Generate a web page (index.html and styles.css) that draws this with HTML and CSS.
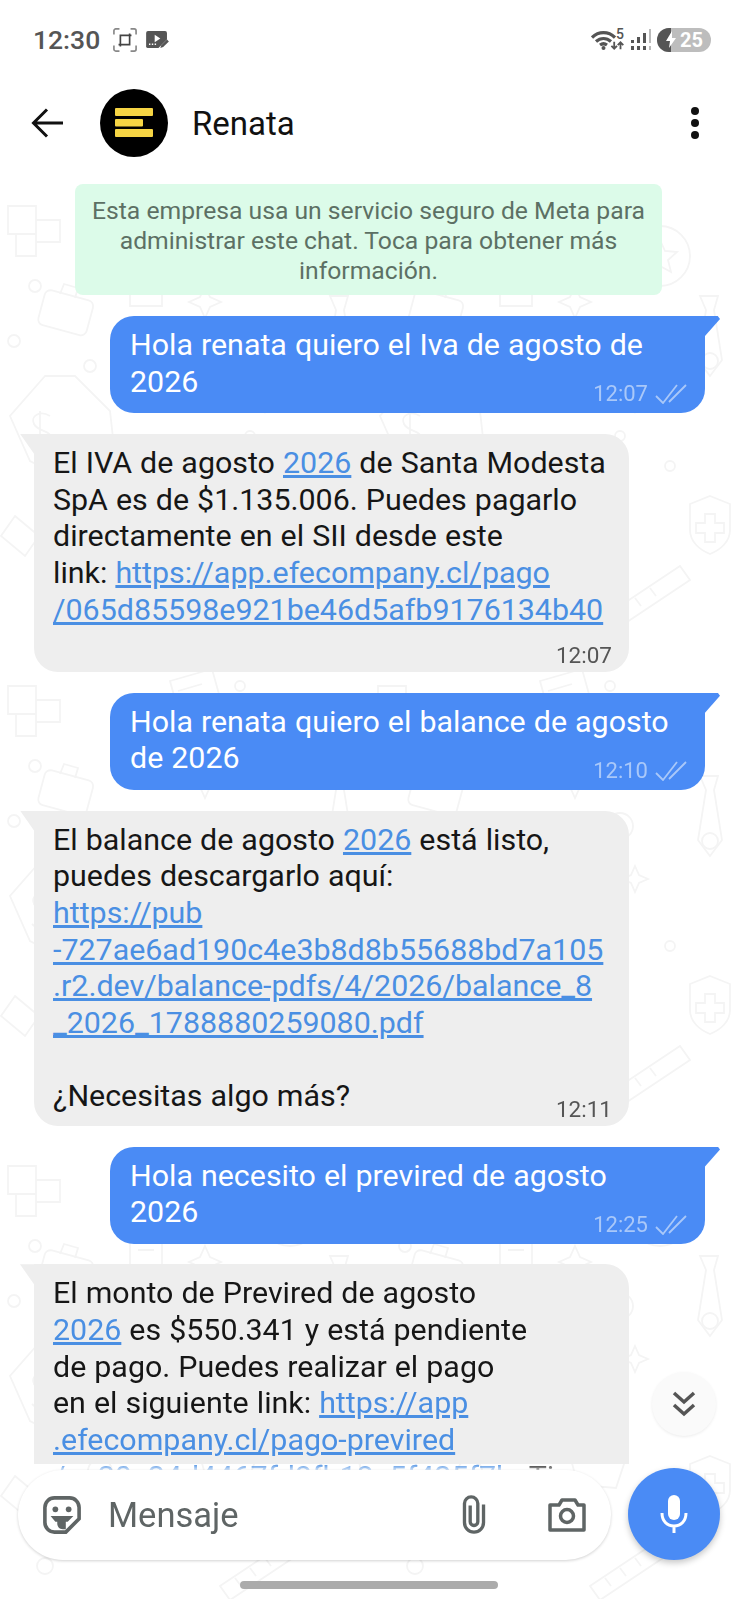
FILE: index.html
```html
<!doctype html>
<html lang="es">
<head>
	<meta charset="utf-8">
	<meta name="viewport" content="width=device-width, initial-scale=1.0">
	<title>Renata</title>
	<link rel="stylesheet" href="styles.css">
</head>
<body>
	<div class="app">
		<div class="status-bar">
			<span class="status-time">12:30</span>
			<svg class="status-crop" width="24" height="24" viewBox="0 0 26 26" fill="none" stroke="#888" stroke-width="1.800">
				<path d="M1 7V3a2 2 0 0 1 2-2h4M19 1h4a2 2 0 0 1 2 2v4M25 19v4a2 2 0 0 1-2 2h-4M7 25H3a2 2 0 0 1-2-2v-4"/>
				<path d="M8 18h10V8H8zM6 18h2M18 8h2M8 20v-2M18 8V6" stroke="#444"/>
			</svg>
			<svg class="status-video" width="23" height="18" viewBox="0 0 24 19">
				<path d="M2 0h18a2 2 0 0 1 2 2v7l-9 9H2a2 2 0 0 1-2-2V2a2 2 0 0 1 2-2z" fill="#555"/>
				<path d="M9 4l6 4-6 4z" fill="#fff"/>
				<path d="M3 14h1.500M6 14h1.500M9 14h1.500" stroke="#fff" stroke-width="1.500"/>
				<path d="M15 18l1-3 6-6 2 2-6 6z" fill="#555"/>
			</svg>
			<div class="status-right">
				<svg class="status-wifi" width="25" height="20" viewBox="0 0 25 20" fill="none" stroke="#555" stroke-width="3.200">
					<path d="M1 7.500C7.500 1 17.500 1 24 7.500M5 11.500c4.500-4 10.500-4 15 0M9 15c2.500-1.800 4.500-1.800 7 0"/>
					<circle cx="12.500" cy="18" r="2" fill="#555" stroke="none"/>
				</svg>
				<div class="status-net">
					<span class="status-five">5</span>
					<svg width="14" height="11" viewBox="0 0 20 11" fill="none" stroke="#555" stroke-width="2.600">
						<path d="M6 0v10M2 6l4 4 4-4M15 11V1M11 5l4-4 4 4"/>
					</svg>
				</div>
				<svg class="status-signal" width="20" height="22" viewBox="0 0 20 22" fill="#555">
					<rect x="0" y="11" width="3" height="3"/><rect x="0" y="17" width="3" height="4"/>
					<rect x="6" y="8" width="3" height="6"/><rect x="6" y="17" width="3" height="4"/>
					<rect x="12" y="4" width="3" height="10"/><rect x="12" y="17" width="3" height="4"/>
					<rect x="18" y="0" width="2" height="14" fill="#bbb"/><rect x="18" y="17" width="2" height="4" fill="#bbb"/>
				</svg>
				<div class="battery">
					<div class="battery-fill">
						<svg width="10" height="17" viewBox="0 0 10 17"><path d="M6 0L0 10h4l-1 7 7-10H6z" fill="#fff"/></svg>
					</div>
					<span class="battery-level">25</span>
				</div>
			</div>
		</div>

		<div class="toolbar">
			<svg class="toolbar-back" width="32" height="30" viewBox="0 0 32 30" fill="none" stroke="#111" stroke-width="3">
				<path d="M32 15H3M16 1.500L2.500 15 16 28.500"/>
			</svg>
			<svg class="toolbar-avatar" width="68" height="68" viewBox="0 0 68 68">
				<circle cx="34" cy="34" r="34" fill="#000"/>
				<rect x="15" y="19" width="38" height="8" rx="1" fill="#f6d544"/>
				<rect x="15" y="30" width="28" height="7.500" rx="1" fill="#f6d544"/>
				<rect x="15" y="40" width="38" height="8" rx="1" fill="#f6d544"/>
			</svg>
			<span class="toolbar-name">Renata</span>
			<div class="toolbar-menu"><i></i><i></i><i></i></div>
		</div>

		<div class="chat">
			<svg class="chat-pattern" width="738" height="1423" xmlns="http://www.w3.org/2000/svg">
				<defs>
					<pattern id="doodles" width="370" height="480" patternUnits="userSpaceOnUse" x="0" y="-10">
						<g fill="none" stroke="#f4f4f4" stroke-width="1.800">
							<path d="M45 210l-35 40 20 45 40 20 45-25-5-45-35-35z"/>
							<path d="M40 245v45M50 250c-10-6-20 0-16 8s18 6 18 16-14 10-20 4"/>
							<rect x="40" y="130" width="50" height="36" rx="6" transform="rotate(15 70 150)"/>
							<path d="M60 128l4-10 14 4-3 10"/>
							<path d="M8 40h28v28H8zM36 54h24v22H36zM16 68h20v22H16z"/>
							<circle cx="35" cy="120" r="6"/><circle cx="90" cy="200" r="6"/><circle cx="14" cy="175" r="6"/>
							<circle cx="100" cy="345" r="12"/><circle cx="45" cy="440" r="8"/><circle cx="120" cy="420" r="6"/>
							<circle cx="290" cy="90" r="30"/><path d="M290 74l5 11 12 1-9 8 3 12-11-6-11 6 3-12-9-8 12-1z"/>
							<circle cx="205" cy="230" r="7"/><circle cx="250" cy="180" r="13"/><circle cx="340" cy="195" r="8"/>
							<path d="M200 330l24-18 32 20-10 30-38-3z"/>
							<path d="M170 35l42-12 10 36-42 12zM178 45l24-7M182 57l24-7"/>
							<path d="M330 130h18l-4 14 8 50-12 16-12-16 8-50z"/>
							<path d="M130 100h32v40h-32zM138 112h16M138 124h16"/>
							<path d="M310 400l-90 60 10 14 90-60zM235 452l6 8M250 442l6 8M265 432l6 8M280 422l6 8"/>
							<circle cx="170" cy="400" r="22"/><circle cx="170" cy="400" r="11"/>
							<path d="M80 360c22-20 56-18 70 0s2 40-15 46"/>
							<path d="M340 330l20 8v26c0 12-10 20-20 24-10-4-20-12-20-24v-26zM335 348h10v9h9v10h-9v9h-10v-9h-9v-10h9z"/>
							<path d="M205 120l5 11 11 5-11 5-5 11-5-11-11-5 11-5z"/>
							<path d="M120 280c-15 12-5 38 15 44l26-22-15-22z"/>
							<path d="M15 350l24 20-14 20-24-20z"/>
							<circle cx="150" cy="60" r="5"/><circle cx="250" cy="270" r="5"/><circle cx="300" cy="300" r="5"/>
							<circle cx="60" cy="325" r="5"/><circle cx="240" cy="40" r="5"/><circle cx="130" cy="220" r="10"/>
							<path d="M265 220l4 9 9 4-9 4-4 9-4-9-9-4 9-4z"/>
						</g>
					</pattern>
				</defs>
				<rect width="738" height="1423" fill="url(#doodles)"/>
			</svg>

			<div class="messages">
				<div class="notice">Esta empresa usa un servicio seguro de Meta para<br>administrar este chat. Toca para obtener más<br>información.</div>

				<div class="bubble bubble-out">
					<p>Hola renata quiero el Iva de agosto de<br>2026</p>
					<div class="meta">12:07
						<svg class="meta-check" width="33" height="20" viewBox="0 0 33 20"><path d="M1 12l7 7L22 1M14 18L31 1" fill="none" stroke="currentColor" stroke-width="1.800"/></svg>
					</div>
				</div>

				<div class="bubble bubble-in bubble-spaced">
					<p>El IVA de agosto <a href="#">2026</a> de Santa Modesta<br>SpA es de $1.135.006. Puedes pagarlo<br>directamente en el SII desde este<br>link: <a href="#">https://app.efecompany.cl/pago<br>/065d85598e921be46d5afb9176134b40</a></p>
					<div class="meta">12:07</div>
				</div>

				<div class="bubble bubble-out">
					<p>Hola renata quiero el balance de agosto<br>de 2026</p>
					<div class="meta">12:10
						<svg class="meta-check" width="33" height="20" viewBox="0 0 33 20"><path d="M1 12l7 7L22 1M14 18L31 1" fill="none" stroke="currentColor" stroke-width="1.800"/></svg>
					</div>
				</div>

				<div class="bubble bubble-in">
					<p>El balance de agosto <a href="#">2026</a> está listo,<br>puedes descargarlo aquí:<br><a href="#">https://pub<br>-727ae6ad190c4e3b8d8b55688bd7a105<br>.r2.dev/balance-pdfs/4/2026/balance_8<br>_2026_1788880259080.pdf</a><br><br>¿Necesitas algo más?</p>
					<div class="meta">12:11</div>
				</div>

				<div class="bubble bubble-out">
					<p>Hola necesito el previred de agosto<br>2026</p>
					<div class="meta">12:25
						<svg class="meta-check" width="33" height="20" viewBox="0 0 33 20"><path d="M1 12l7 7L22 1M14 18L31 1" fill="none" stroke="currentColor" stroke-width="1.800"/></svg>
					</div>
				</div>

				<div class="bubble bubble-in bubble-clipped">
					<p>El monto de Previred de agosto<br><a href="#">2026</a> es $550.341 y está pendiente<br>de pago. Puedes realizar el pago<br>en el siguiente link: <a href="#">https://app<br>.efecompany.cl/pago-previred<br>/ee30c24d4467fd8fb18c5f425f7b</a>. Ti</p>
				</div>
			</div>

			<button class="scroll-down">
				<svg width="24" height="26" viewBox="0 0 24 26" fill="none" stroke="#555" stroke-width="3.500"><path d="M2 2l10 9 10-9M2 14l10 9 10-9"/></svg>
			</button>

			<div class="composer">
				<div class="composer-box">
					<svg class="composer-sticker" width="38" height="38" viewBox="0 0 40 40">
						<path d="M12 2h16a10 10 0 0 1 10 10v12L24 38H12A10 10 0 0 1 2 28V12A10 10 0 0 1 12 2z" fill="none" stroke="#5f6565" stroke-width="3.800"/>
						<circle cx="13" cy="14" r="3" fill="#5f6565"/><circle cx="27" cy="14" r="3" fill="#5f6565"/>
						<path d="M8 21h24l-6 6h-2v8h-3c-4 0-6-3-6-6v-2h-2z" fill="#5f6565"/>
					</svg>
					<span class="composer-label">Mensaje</span>
					<svg class="composer-clip" width="26" height="40" viewBox="0 0 26 42" fill="none" stroke="#5f6565" stroke-width="3.500">
						<path d="M23 10v19a10 10 0 0 1-20 0V9a7 7 0 0 1 14 0v19a4 4 0 0 1-8 0V11"/>
					</svg>
					<svg class="composer-camera" width="40" height="36" viewBox="0 0 40 36">
						<path d="M3 8h9l3-5h13l3 5h6v25H3z" fill="none" stroke="#5f6565" stroke-width="3.500" stroke-linejoin="round"/>
						<circle cx="20" cy="19" r="6.500" fill="none" stroke="#5f6565" stroke-width="3.500"/>
					</svg>
				</div>
				<button class="composer-mic">
					<svg width="28" height="38" viewBox="0 0 28 38" fill="none">
						<rect x="8" y="0" width="12" height="25" rx="6" fill="#fff"/>
						<path d="M2 18c0 8 5 13 12 13s12-5 12-13M14 31v7" stroke="#fff" stroke-width="3"/>
					</svg>
				</button>
			</div>
			<div class="home-bar"></div>
		</div>
	</div>
</body>
</html>
```

FILE: styles.css
```css
* {
	box-sizing: border-box;
}
html,
body {
	margin: 0;
	height: 100%;
	background: #fff;
}
p {
	margin: 0;
}

.app {
	width: 738px;
	height: 1599px;
	overflow: hidden;
	display: flex;
	flex-direction: column;
	font-family: Roboto, "Noto Sans", sans-serif;
}

/* status bar */
.status-bar {
	height: 73px;
	padding: 6px 27px 0 33px;
	display: flex;
	align-items: center;
	flex: none;
}
.status-time {
	font-size: 26.500px;
	font-weight: 500;
	color: #555;
}
.status-crop {
	margin-left: 13px;
}
.status-video {
	margin-left: 9px;
}
.status-right {
	margin-left: auto;
	display: flex;
	align-items: center;
}
.status-wifi {
	margin-right: -6px;
}
.status-net {
	width: 14px;
	height: 22px;
	display: flex;
	flex-direction: column;
	align-items: flex-end;
	flex: none;
}
.status-net svg {
	flex: none;
}
.status-five {
	font-size: 14px;
	line-height: 11px;
	color: #555;
	font-weight: 500;
}
.status-signal {
	margin-left: 7px;
}
.battery {
	width: 54px;
	height: 24px;
	margin-left: 6px;
	border-radius: 12px;
	background: #bdbdbd;
	overflow: hidden;
	display: flex;
	align-items: center;
}
.battery-fill {
	width: 14px;
	height: 24px;
	background: #555;
	display: flex;
	align-items: center;
	justify-content: flex-end;
	flex: none;
}
.battery-fill svg {
	margin-right: -5px;
}
.battery-level {
	margin-left: 9px;
	font-size: 20px;
	font-weight: 700;
	color: #fff;
}

/* toolbar */
.toolbar {
	height: 103px;
	padding: 0 0 3px 31px;
	display: flex;
	align-items: center;
	flex: none;
}
.toolbar-avatar {
	margin-left: 37px;
}
.toolbar-name {
	margin-left: 24px;
	font-size: 33px;
	color: #111;
}
.toolbar-menu {
	margin-left: auto;
	margin-right: 39px;
	display: flex;
	flex-direction: column;
	gap: 4px;
}
.toolbar-menu i {
	display: block;
	width: 8px;
	height: 8px;
	border-radius: 50%;
	background: #111;
}

/* chat */
.chat {
	position: relative;
	flex: 1;
	min-height: 0;
	display: flex;
	flex-direction: column;
}
.chat-pattern {
	position: absolute;
	left: 0;
	top: 0;
}
/* list runs 8px under the composer, the last line of text fades out there */
.messages {
	position: relative;
	height: 1296px;
	flex: none;
	overflow: hidden;
	padding-top: 8px;
	display: flex;
	flex-direction: column;
	align-items: flex-start;
	-webkit-mask-image: linear-gradient(to bottom, #000 1288px, transparent 1296px);
	mask-image: linear-gradient(to bottom, #000 1288px, transparent 1296px);
}
.notice {
	width: 587px;
	margin-left: 75px;
	margin-bottom: 21px;
	padding: 12px 8px 9px;
	border-radius: 8px;
	background: #dcfbe9;
	color: #5c7064;
	font-size: 24.700px;
	line-height: 30px;
	text-align: center;
	flex: none;
}

.bubble {
	position: relative;
	width: 595px;
	padding: 11px 19px 11px;
	margin-bottom: 20.400px;
	font-size: 30.400px;
	line-height: 36.700px;
	word-spacing: .5px;
	flex: none;
}
.bubble-out {
	margin-left: 110px;
	padding-left: 20px;
	padding-bottom: 13px;
	background: #4a8bf5;
	color: #fff;
	border-radius: 0 0 24px 24px / 0 0 24px 24px;
	border-top-left-radius: 24px;
}
.bubble-out::after {
	content: "";
	position: absolute;
	left: 100%;
	top: 0;
	width: 15px;
	height: 20px;
	background: #4a8bf5;
	clip-path: polygon(0 0, 85% 0, 100% 15%, 0 100%);
}
.bubble-in {
	margin-left: 34px;
	background: #eeeeee;
	color: #161616;
	border-radius: 0 24px 24px 24px;
}
.bubble-in::before {
	content: "";
	position: absolute;
	right: 100%;
	top: 0;
	width: 14px;
	height: 20px;
	background: #eeeeee;
	clip-path: polygon(0 0, 100% 0, 100% 100%);
}
.bubble-spaced {
	padding-bottom: 44px;
}
.bubble-clipped {
	height: 200px;
	border-radius: 0 24px 0 0;
}
.bubble a {
	color: #4a8fe3;
}
.meta {
	position: absolute;
	right: 17px;
	bottom: 6px;
	height: 26px;
	display: flex;
	align-items: center;
	gap: 7px;
	font-size: 22px;
	line-height: 26px;
	word-spacing: 0;
	color: #555;
}
.bubble-in .meta {
	bottom: 4px;
	font-size: 22.500px;
}
.bubble-out .meta {
	color: #a9c8f9;
}

/* scroll button and composer */
.scroll-down {
	position: absolute;
	left: 652px;
	top: 1196px;
	width: 64px;
	height: 64px;
	padding: 0;
	border: 0;
	border-radius: 50%;
	background: #fafafa;
	box-shadow: 0 1px 3px rgba(0, 0, 0, .08);
	display: flex;
	align-items: center;
	justify-content: center;
}
.composer {
	position: relative;
	margin-top: -8px;
	padding: 4px 18px 0;
	display: flex;
	align-items: flex-end;
	flex: none;
}
.composer-box {
	width: 593px;
	height: 90px;
	padding: 0 24px 0 25px;
	border-radius: 45px;
	background: #fff;
	box-shadow: 0 1px 3px rgba(0, 0, 0, .18);
	display: flex;
	align-items: center;
}
.composer-label {
	margin-left: 27px;
	font-size: 34.500px;
	color: #5f6565;
}
.composer-clip {
	margin-left: auto;
}
.composer-camera {
	margin-left: 60px;
}
.composer-mic {
	width: 92px;
	height: 92px;
	margin-left: 17px;
	padding: 0;
	border: 0;
	border-radius: 50%;
	background: #4a8bf5;
	box-shadow: 0 3px 6px rgba(0, 0, 0, .22);
	display: flex;
	align-items: center;
	justify-content: center;
	flex: none;
}
.home-bar {
	position: relative;
	width: 258px;
	height: 8px;
	margin: 21px 0 0 240px;
	border-radius: 4px;
	background: #ababab;
	flex: none;
}
```
